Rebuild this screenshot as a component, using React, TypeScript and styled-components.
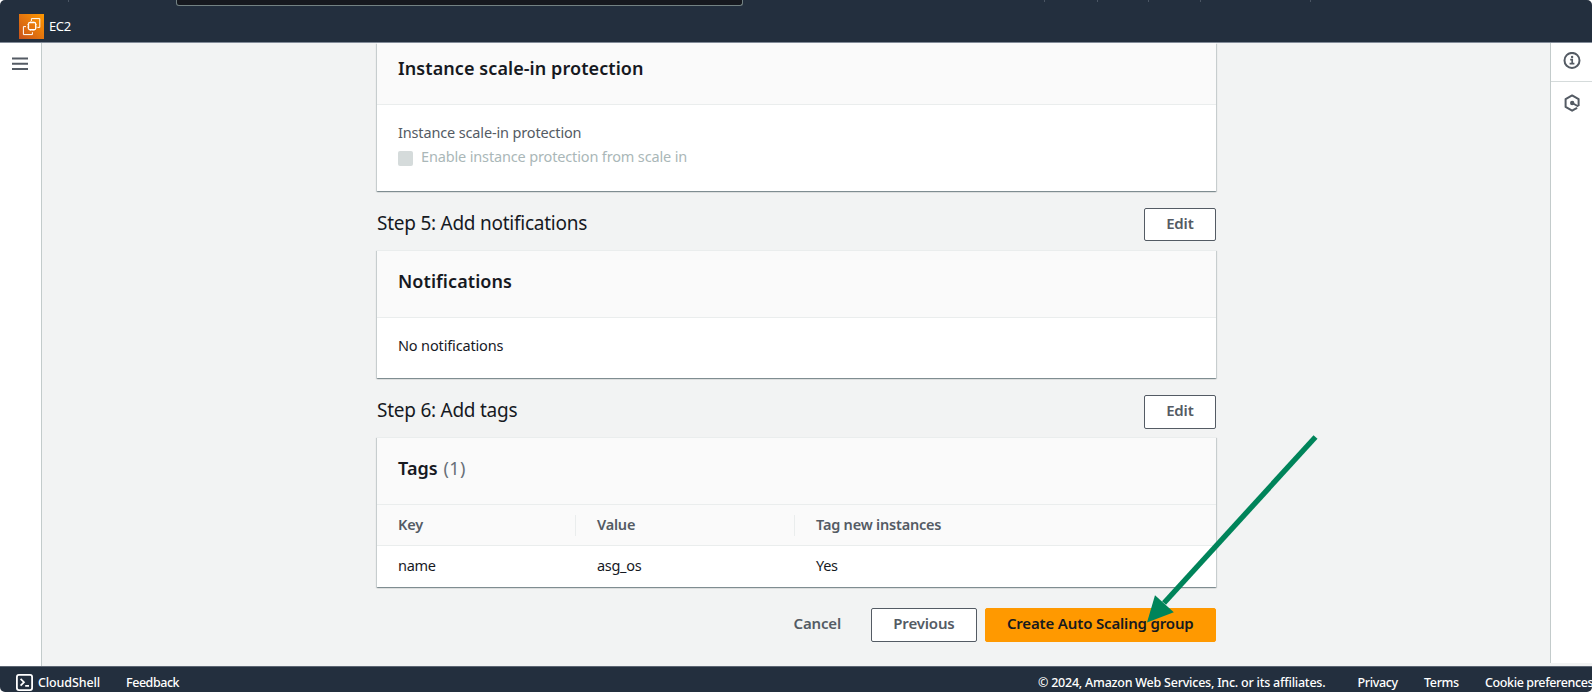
import React from "react";
import styled, { createGlobalStyle } from "styled-components";

const GlobalStyle = createGlobalStyle`
  *, *::before, *::after { box-sizing: border-box; }
  body {
    margin: 0;
    background: #fff;
    color: #16191f;
    font-family: "Noto Sans", "Open Sans", sans-serif;
    font-size: 14.5px;
    letter-spacing: -0.15px;
  }
`;

const Window = styled.div`
  position: relative;
  display: flex;
  flex-direction: column;
  width: 1592px;
  height: 692px;
  overflow: hidden;
  border-radius: 5px;
  background: #f2f3f3;
`;

/* ---------- Top navigation ---------- */

const TopNav = styled.header`
  flex: none;
  height: 43px;
  background: #232f3e;
  border-bottom: 1px solid #828b98;
`;

const NavStrip = styled.div`
  display: flex;
  height: 6px;
`;

const SearchBox = styled.div`
  width: 567px;
  height: 6px;
  margin-left: 107px;
  margin-right: 301px;
  background: #16191f;
  border: 1px solid #738283;
  border-top: 0;
  border-radius: 0 0 3px 3px;
`;

const Tick = styled.span<{ $before?: number }>`
  width: 1px;
  height: 2px;
  margin-left: ${(p) => p.$before ?? 0}px;
  background: #4a5563;
`;

const ServiceLink = styled.div`
  display: flex;
  align-items: center;
  gap: 5px;
  height: 25px;
  margin: 8px 0 0 19px;
  color: #fff;
  font-size: 13px;
  letter-spacing: -0.4px;
`;

const ServiceName = styled.span`
  padding-bottom: 2px;
`;

/* ---------- Page body ---------- */

const Body = styled.div`
  display: flex;
  flex: 1;
  min-height: 0;
`;

const SideRail = styled.nav`
  flex: none;
  width: 42px;
  padding: 14px 0 0 12px;
  background: #fff;
  border-right: 1px solid #c3cbcb;
  line-height: 0;
`;

const Main = styled.main`
  flex: 1;
  padding-left: 335px;
`;

const Column = styled.div`
  width: 839px;
`;

const ToolsRail = styled.aside`
  flex: none;
  width: 42px;
  height: 620px;
  background: #fff;
  border-left: 1px solid #c3cbcb;
`;

const ToolButton = styled.div<{ $divided?: boolean }>`
  display: flex;
  justify-content: center;
  height: ${(p) => (p.$divided ? 39 : 42)}px;
  padding-top: ${(p) => (p.$divided ? 9 : 12)}px;
  border-bottom: ${(p) => (p.$divided ? "1px solid #d5dbdb" : "0")};
`;

/* ---------- Cards ---------- */

const Card = styled.section<{ $scrolled?: boolean }>`
  background: #fff;
  border-top: ${(p) => (p.$scrolled ? "0" : "1px solid #eaeded")};
  box-shadow:
    0 1px 1px 0 rgba(0, 28, 36, 0.3),
    1px 1px 1px 0 rgba(0, 28, 36, 0.13),
    -1px 1px 1px 0 rgba(0, 28, 36, 0.13);
`;

const CardHeader = styled.div<{ $scrolled?: boolean }>`
  height: ${(p) => (p.$scrolled ? 62 : 67)}px;
  padding: ${(p) => (p.$scrolled ? 14 : 19)}px 21px 0;
  background: #fafafa;
  border-bottom: 1px solid #eaeded;
`;

const CardTitle = styled.h2`
  margin: 0;
  font-size: 18px;
  font-weight: 600;
  line-height: 22px;
  letter-spacing: 0.08px;
`;

const Counter = styled.span`
  margin-left: 1px;
  color: #687078;
  font-weight: 400;
  letter-spacing: 0.4px;
`;

const CardBody = styled.div<{ $height: number }>`
  height: ${(p) => p.$height}px;
  padding: 16px 21px 0;
  line-height: 22px;
`;

const FieldLabel = styled.div`
  height: 24px;
  color: #545b64;
`;

const CheckboxRow = styled.label`
  display: flex;
  align-items: flex-start;
  gap: 8px;
  height: 25px;
  color: #aab7b8;
`;

const Checkbox = styled.span`
  width: 15px;
  height: 15px;
  margin-top: 6px;
  background: #d5dbdb;
  border-radius: 2px;
`;

const StepHeader = styled.div<{ $height: number; $gap: number }>`
  display: flex;
  justify-content: space-between;
  height: ${(p) => p.$height}px;
  margin: 17px 0 ${(p) => p.$gap}px;
`;

const StepTitle = styled.h1`
  margin: 0;
  font-size: 19px;
  font-weight: 400;
  line-height: 31px;
  letter-spacing: -0.25px;
`;

/* ---------- Buttons ---------- */

const Button = styled.button<{ $variant?: "primary" | "link" }>`
  padding: 0 21.4px 4px;
  border: 1px solid
    ${(p) => (p.$variant === "primary" ? "#ff9900" : p.$variant === "link" ? "transparent" : "#545b64")};
  border-radius: 2px;
  background: ${(p) => (p.$variant === "primary" ? "#ff9900" : p.$variant === "link" ? "transparent" : "#fff")};
  color: ${(p) => (p.$variant === "primary" ? "#16191f" : "#545b64")};
  font: 600 15px "Noto Sans", sans-serif;
  letter-spacing: -0.16px;
  white-space: nowrap;
`;

const Actions = styled.div`
  display: flex;
  justify-content: flex-end;
  gap: 7.5px;
  height: 34px;
  margin-top: 21px;
`;

/* ---------- Tags table ---------- */

const TableRow = styled.div<{ $head?: boolean }>`
  display: grid;
  grid-template-columns: 199px 219px 1fr;
  align-items: center;
  height: 41px;
  background: ${(p) => (p.$head ? "#fafafa" : "#fff")};
  border-bottom: ${(p) => (p.$head ? "1px solid #eaeded" : "0")};
`;

const HeadCell = styled.div`
  height: 21px;
  padding-left: 21px;
  border-right: 1px solid #eaeded;
  color: #545b64;
  font-weight: 600;
  line-height: 19px;
  letter-spacing: -0.2px;

  &:last-child {
    border-right: 0;
  }
`;

const Cell = styled.div`
  padding: 0 0 2px 21px;
  line-height: 21px;
  letter-spacing: -0.3px;
`;

/* ---------- Footer ---------- */

const Footer = styled.footer`
  display: flex;
  flex: none;
  height: 26px;
  padding: 8px 0 0 16px;
  background: #232f3e;
  border-top: 1px solid #5c6572;
  color: #fff;
  font-size: 12.5px;
  font-weight: 500;
  line-height: 16px;
  white-space: nowrap;
`;

const FooterItem = styled.span<{ $width: number; $tracking: number }>`
  flex: none;
  width: ${(p) => p.$width}px;
  letter-spacing: ${(p) => p.$tracking}px;
`;

const ShellMark = styled.svg`
  flex: none;
  width: 17px;
  height: 17px;
  margin: -1px 5px 0 0;
`;

const Pointer = styled.svg`
  position: absolute;
  left: 1140px;
  top: 430px;
  pointer-events: none;
`;

const Ec2Icon = () => (
  <svg width="25" height="25" viewBox="0 0 25 25" fill="none" stroke="#fff">
    <defs>
      <linearGradient id="ec2" x1="0" y1="1" x2="1" y2="0">
        <stop offset="0" stopColor="#c8511b" />
        <stop offset="1" stopColor="#ff9900" />
      </linearGradient>
    </defs>
    <rect width="25" height="25" fill="url(#ec2)" stroke="none" />
    <path d="M12.4 7.2V4.6h8.4v8.8h-2.4M7 12.6H4.4v8h9v-2.4" strokeWidth="1" />
    <rect x="9.6" y="8.6" width="7" height="7" rx="0.8" strokeWidth="1.1" />
    <path
      d="M11.4 7.2v1.2M13.1 7.2v1.2M14.8 7.2v1.2M11.4 15.8V17M13.1 15.8V17M14.8 15.8V17M8.2 10.4h1.2M8.2 12.1h1.2M8.2 13.8h1.2M16.8 10.4H18M16.8 12.1H18M16.8 13.8H18"
      strokeWidth="0.7"
    />
  </svg>
);

const MenuIcon = () => (
  <svg width="16" height="14" viewBox="0 0 16 14" stroke="#545b64" strokeWidth="1.9">
    <path d="M0 1.5h16M0 6.7h16M0 12h16" />
  </svg>
);

const InfoIcon = () => (
  <svg width="18" height="18" viewBox="0 0 18 18" fill="none" stroke="#545b64" strokeWidth="2">
    <circle cx="9" cy="8.4" r="7.5" />
    <path d="M7.2 7.6h2v4M6.6 11.6h4.8" strokeWidth="1.7" />
    <circle cx="9.1" cy="5" r="1.2" fill="#545b64" stroke="none" />
  </svg>
);

const HexIcon = () => (
  <svg width="18" height="18" viewBox="0 0 18 18" fill="none" stroke="#545b64" strokeWidth="2">
    <path d="M15.6 12V5.1L9.1 1.4 2.6 5.1v7.8l6.5 3.8 5-2.9" strokeLinejoin="round" />
    <circle cx="9.2" cy="9" r="2.2" fill="#545b64" stroke="none" />
    <path d="M9.2 9l6.2 3.5" />
  </svg>
);

export default function App() {
  return (
    <>
      <GlobalStyle />
      <Window>
        <TopNav>
          <NavStrip>
            <Tick $before={68} />
            <SearchBox />
            <Tick />
            <Tick $before={52} />
            <Tick $before={50} />
            <Tick $before={51} />
            <Tick $before={109} />
          </NavStrip>
          <ServiceLink>
            <Ec2Icon />
            <ServiceName>EC2</ServiceName>
          </ServiceLink>
        </TopNav>

        <Body>
          <SideRail>
            <MenuIcon />
          </SideRail>
          <Main>
            <Column>
              <Card $scrolled>
                <CardHeader $scrolled>
                  <CardTitle>Instance scale-in protection</CardTitle>
                </CardHeader>
                <CardBody $height={86}>
                  <FieldLabel>Instance scale-in protection</FieldLabel>
                  <CheckboxRow>
                    <Checkbox />
                    Enable instance protection from scale in
                  </CheckboxRow>
                </CardBody>
              </Card>

              <StepHeader $height={33} $gap={9}>
                <StepTitle>Step 5: Add notifications</StepTitle>
                <Button>Edit</Button>
              </StepHeader>
              <Card>
                <CardHeader>
                  <CardTitle>Notifications</CardTitle>
                </CardHeader>
                <CardBody $height={60}>No notifications</CardBody>
              </Card>

              <StepHeader $height={34} $gap={8}>
                <StepTitle>Step 6: Add tags</StepTitle>
                <Button>Edit</Button>
              </StepHeader>
              <Card>
                <CardHeader>
                  <CardTitle>
                    Tags <Counter>(1)</Counter>
                  </CardTitle>
                </CardHeader>
                <TableRow $head>
                  <HeadCell>Key</HeadCell>
                  <HeadCell>Value</HeadCell>
                  <HeadCell>Tag new instances</HeadCell>
                </TableRow>
                <TableRow>
                  <Cell>name</Cell>
                  <Cell>asg_os</Cell>
                  <Cell>Yes</Cell>
                </TableRow>
              </Card>

              <Actions>
                <Button $variant="link">Cancel</Button>
                <Button>Previous</Button>
                <Button $variant="primary">Create Auto Scaling group</Button>
              </Actions>
            </Column>
          </Main>
          <ToolsRail>
            <ToolButton $divided>
              <InfoIcon />
            </ToolButton>
            <ToolButton>
              <HexIcon />
            </ToolButton>
          </ToolsRail>
        </Body>

        <Footer>
          <ShellMark viewBox="0 0 17 17" fill="none" stroke="#fff" strokeWidth="1.8">
            <rect x="0.9" y="0.9" width="15.2" height="15.2" rx="2" />
            <path d="M4.6 4.8l3.4 3.4-3.4 3.4M9.2 11.8h3.8" strokeWidth="1.7" />
          </ShellMark>
          <FooterItem $width={88} $tracking={-0.12}>CloudShell</FooterItem>
          <FooterItem $width={912} $tracking={-0.45}>Feedback</FooterItem>
          <FooterItem $width={319.5} $tracking={-0.23}>
            © 2024, Amazon Web Services, Inc. or its affiliates.
          </FooterItem>
          <FooterItem $width={66.5} $tracking={-0.35}>Privacy</FooterItem>
          <FooterItem $width={61} $tracking={-0.35}>Terms</FooterItem>
          <FooterItem $width={110} $tracking={-0.38}>Cookie preferences</FooterItem>
        </Footer>

        <Pointer width="184" height="200" viewBox="0 0 184 200">
          <path d="M175.5 7L24 173" stroke="#00845a" strokeWidth="5.4" />
          <path d="M7 192.5L15 165.3 33.8 182.3z" fill="#00845a" />
        </Pointer>
      </Window>
    </>
  );
}
